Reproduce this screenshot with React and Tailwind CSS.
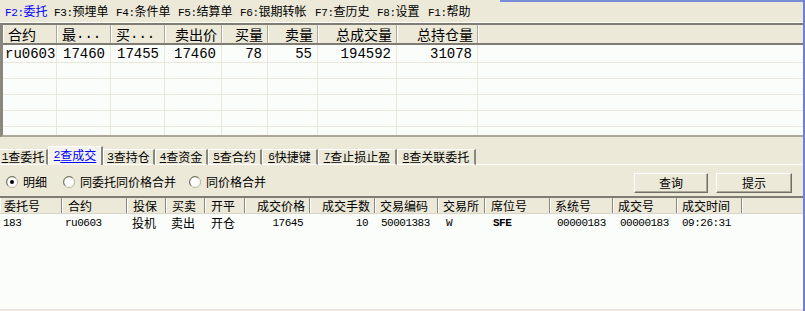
import React from "react";

const tools = [
  { k: "F2:", t: "委托", w: "w-[49px]", blue: true },
  { k: "F3:", t: "预埋单", w: "w-[62px]" },
  { k: "F4:", t: "条件单", w: "w-[62px]" },
  { k: "F5:", t: "结算单", w: "w-[62px]" },
  { k: "F6:", t: "银期转帐", w: "w-[75px]" },
  { k: "F7:", t: "查历史", w: "w-[62px]" },
  { k: "F8:", t: "设置", w: "w-[51px]" },
  { k: "F1:", t: "帮助", w: "w-[50px]" },
];

const topCols = [
  { t: "合约", w: "w-[54px]", r: false, d: "ru0603" },
  { t: "最", dots: true, w: "w-[54px]", r: false, d: "17460" },
  { t: "买", dots: true, w: "w-[54px]", r: false, d: "17455" },
  { t: "卖出价", w: "w-[57px]", r: true, d: "17460" },
  { t: "买量", w: "w-[46px]", r: true, d: "78" },
  { t: "卖量", w: "w-[50px]", r: true, d: "55" },
  { t: "总成交量", w: "w-[79px]", r: true, d: "194592" },
  { t: "总持仓量", w: "w-[81px]", r: true, d: "31078" },
];

const tabs = [
  { n: "1", t: "查委托", w: "w-[48px]" },
  { n: "2", t: "查成交", w: "w-[55px]", sel: true },
  { n: "3", t: "查持仓", w: "w-[52px]" },
  { n: "4", t: "查资金", w: "w-[53px]" },
  { n: "5", t: "查合约", w: "w-[54px]" },
  { n: "6", t: "快捷键", w: "w-[56px]" },
  { n: "7", t: "查止损止盈", w: "w-[79px]" },
  { n: "8", t: "查关联委托", w: "w-[79px]" },
];

const botCols = [
  { t: "委托号", w: "w-[62px]", hp: "pl-[3px]", d: "183", dp: "pl-[3px]", asc: true },
  { t: "合约", w: "w-[65px]", hp: "pl-[5px]", d: "ru0603", dp: "pl-[3px]", asc: true },
  { t: "投保", w: "w-[39px]", hp: "pl-[5px]", d: "投机", dp: "pl-[5px]" },
  { t: "买卖", w: "w-[39px]", hp: "pl-[5px]", d: "卖出", dp: "pl-[5px]" },
  { t: "开平", w: "w-[40px]", hp: "pl-[5px]", d: "开仓", dp: "pl-[6px]" },
  { t: "成交价格", w: "w-[65px]", hp: "pr-[4px]", r: true, d: "17645", dp: "pr-[7px]", asc: true },
  { t: "成交手数", w: "w-[65px]", hp: "pr-[4px]", r: true, d: "10", dp: "pr-[7px]", asc: true },
  { t: "交易编码", w: "w-[63px]", hp: "pl-[4px]", d: "50001383", dp: "pl-[6px]", asc: true },
  { t: "交易所", w: "w-[47px]", hp: "pl-[4px]", d: "W", dp: "pl-[8px]", asc: true },
  { t: "席位号", w: "w-[65px]", hp: "pl-[5px]", d: "SFE", dp: "pl-[8px]", asc: true, bold: true },
  { t: "系统号", w: "w-[63px]", hp: "pl-[4px]", d: "00000183", dp: "pl-[7px]", asc: true },
  { t: "成交号", w: "w-[64px]", hp: "pl-[4px]", d: "00000183", dp: "pl-[7px]", asc: true },
  { t: "成交时间", w: "w-[65px]", hp: "pl-[4px]", d: "09:26:31", dp: "pl-[5px]", asc: true },
];

function Radio({ checked }) {
  return (
    <svg width="12" height="12" viewBox="0 0 12 12" className="shrink-0">
      <circle cx="6" cy="6" r="5.5" fill="#ffffff" stroke="#ACA899" strokeWidth="1" />
      <path d="M2.2 9.8 A5 5 0 0 1 9.8 2.2" fill="none" stroke="#716F64" strokeWidth="1" />
      <path d="M2.6 9.4 A4.5 4.5 0 0 0 9.4 2.6" fill="none" stroke="#F1EFE2" strokeWidth="1" />
      {checked && <circle cx="6" cy="6" r="2" fill="#000000" />}
    </svg>
  );
}

function Btn({ children, w }) {
  return (
    <div
      className={`${w} h-[20px] flex items-center justify-center border border-t-white border-l-white border-r-[#716F64] border-b-[#716F64] shadow-[inset_-1px_-1px_0_#ACA899] bg-[#ECE9D8] leading-[14px]`}
    >
      {children}
    </div>
  );
}

export default function App() {
  return (
    <div className="w-[805px] h-[311px] flex bg-[#ECE9D8] overflow-hidden font-['Noto_Sans_CJK_SC',sans-serif] text-[12px] leading-[14px] text-black">
      <div className="w-[803px] flex flex-col">
        {/* toolbar */}
        <div className="h-[23px] flex flex-col shrink-0">
          <div className="h-[2px] flex">
            <div className="w-[500px]" />
            <div className="flex-1 bg-[#7A8CD8]" />
          </div>
          <div className="h-[19px] flex items-center pl-[5px]">
            {tools.map((it, i) => (
              <div
                key={i}
                className={`${it.w} shrink-0 whitespace-nowrap ${it.blue ? "text-[#0000FF]" : "text-black"}`}
              >
                <span className="font-['Liberation_Mono'] text-[11px] tracking-[-0.4px]">{it.k}</span>
                {it.t}
              </div>
            ))}
          </div>
          <div className="h-[2px] border-b border-white" />
        </div>

        {/* top grid */}
        <div className="h-[114px] shrink-0 flex flex-col border-t-2 border-l-[3px] border-b-2 border-t-[#7F7D73] border-l-[#8A887E] border-b-[#ACA899] bg-[#FBFDFA]">
          <div className="h-[20px] flex bg-[#ECE9D8] border-b-2 border-b-[#7F7D73] text-[14px] leading-[16px]">
            {topCols.map((c, i) => (
              <div
                key={i}
                className={`${c.w} shrink-0 flex items-center border-l border-l-white border-r border-r-[#ACA899] whitespace-nowrap ${c.r ? "justify-end pr-[4px]" : "justify-start pl-[4px]"}`}
              >
                {c.t}
                {c.dots && <span className="font-['Liberation_Mono'] text-[14px]">...</span>}
              </div>
            ))}
            <div className="flex-1 border-l border-l-white" />
          </div>
          <div className="h-[90px] overflow-hidden flex flex-col">
            {[0, 1, 2, 3, 4, 5].map((r) => (
              <div
                key={r}
                className={`${r === 0 ? "h-[18px]" : "h-[16px]"} shrink-0 flex border-b border-b-[#E9E6DA]`}
              >
                {topCols.map((c, i) => (
                  <div
                    key={i}
                    className={`${c.w} shrink-0 flex items-center border-r border-r-[#E9E6DA] font-['Liberation_Mono'] text-[14px] leading-[16px] whitespace-nowrap ${i === 0 ? "justify-start pl-[2px]" : "justify-end pr-[5px]"}`}
                  >
                    {r === 0 ? c.d : ""}
                  </div>
                ))}
                <div className="flex-1" />
              </div>
            ))}
          </div>
        </div>

        {/* gap */}
        <div className="h-[9px] shrink-0" />

        {/* tabs */}
        <div className="h-[19px] shrink-0 flex items-end">
          {tabs.map((tb, i) =>
            tb.sel ? (
              <div
                key={i}
                className={`${tb.w} shrink-0 h-[19px] flex items-center justify-center pb-[2px] border-t border-l border-t-white border-l-white border-r-2 border-r-[#8A887E] bg-[#F4F3EE] text-[#0000FF] underline underline-offset-2 whitespace-nowrap`}
              >
                <span className="font-['Liberation_Mono'] text-[11px]">{tb.n}</span>
                {tb.t}
              </div>
            ) : (
              <div
                key={i}
                className={`${tb.w} shrink-0 h-[16px] flex items-center justify-center border-t ${i === 0 ? "" : "border-l border-l-white"} border-t-white border-b border-b-white border-r-2 border-r-[#8A887E] bg-[#ECE9D8] whitespace-nowrap`}
              >
                <span className="font-['Liberation_Mono'] text-[11px] underline underline-offset-2">{tb.n}</span>
                {tb.t}
              </div>
            )
          )}
          <div className="flex-1 border-b border-b-white h-[1px]" />
        </div>

        {/* panel */}
        <div className="h-[31px] shrink-0 flex items-center pt-[3px] pr-[11px]">
          <div className="flex items-center pl-[6px] w-[63px]">
            <Radio checked />
            <span className="ml-[5px]">明细</span>
          </div>
          <div className="flex items-center w-[126px]">
            <Radio />
            <span className="ml-[5px]">同委托同价格合并</span>
          </div>
          <div className="flex items-center">
            <Radio />
            <span className="ml-[5px]">同价格合并</span>
          </div>
          <div className="flex-1" />
          <div className="flex items-center gap-[8px] pt-[2px]">
            <Btn w="w-[74px]">查询</Btn>
            <Btn w="w-[76px]">提示</Btn>
          </div>
        </div>

        {/* bottom grid */}
        <div className="flex-1 flex flex-col border-t-2 border-t-[#7F7D73] border-b-2 border-b-[#EEE6DC] bg-[#FBFDFA]">
          <div className="h-[16px] shrink-0 flex bg-[#ECE9D8] border-b border-b-[#D8D5C8]">
            {botCols.map((c, i) => (
              <div
                key={i}
                className={`${c.w} shrink-0 flex items-center border-l border-l-white border-r border-r-[#8A887E] whitespace-nowrap ${c.r ? "justify-end" : "justify-start"} ${c.hp}`}
              >
                {c.t}
              </div>
            ))}
            <div className="flex-1 border-l border-l-white" />
          </div>
          <div className="h-[18px] shrink-0 flex">
            {botCols.map((c, i) => (
              <div
                key={i}
                className={`${c.w} shrink-0 flex items-center whitespace-nowrap ${c.r ? "justify-end" : "justify-start"} ${c.dp} ${c.asc ? "font-['Liberation_Mono'] text-[11px] tracking-[-0.5px]" : ""} ${c.bold ? "font-bold" : ""}`}
              >
                {c.d}
              </div>
            ))}
          </div>
          <div className="flex-1" />
        </div>
      </div>
      <div className="w-[2px] bg-[#6F82CF]" />
    </div>
  );
}
